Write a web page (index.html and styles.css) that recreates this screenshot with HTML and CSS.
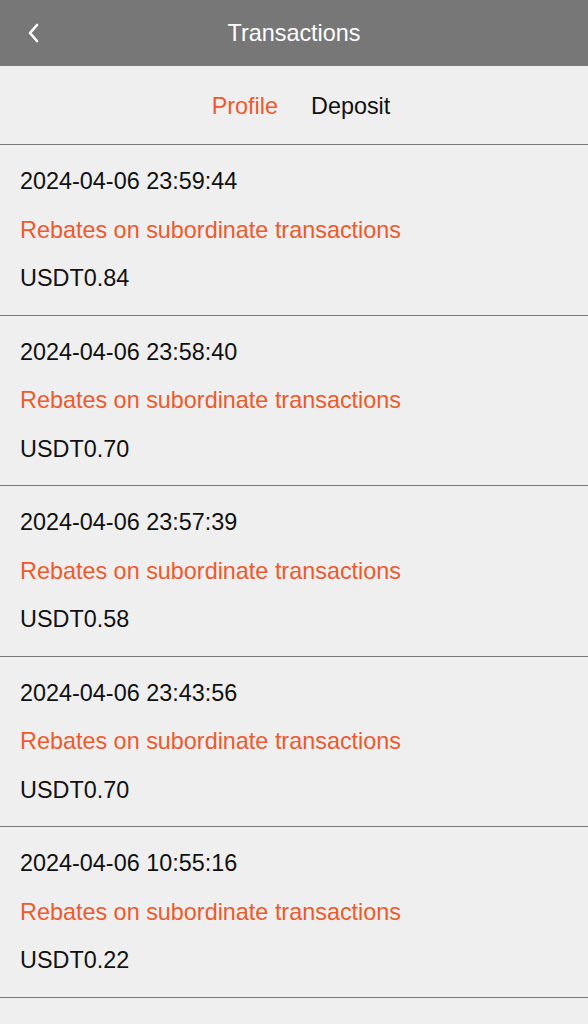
FILE: index.html
```html
<!DOCTYPE html>
<html>
<head>
<meta charset="utf-8">
<link rel="stylesheet" href="styles.css">
</head>
<body>
<header class="topbar">
  <span class="back">
    <svg width="14" height="22" viewBox="0 0 14 22"><path d="M11 3 L4 11 L11 19" fill="none" stroke="#fff" stroke-width="2.6" stroke-linecap="round" stroke-linejoin="round"/></svg>
  </span>
  <h1 class="title">Transactions</h1>
</header>
<nav class="tabs">
  <span class="tab active">Profile</span>
  <span class="tab">Deposit</span>
</nav>
<ul class="list">
  <li class="item"><div class="date">2024-04-06 23:59:44</div><div class="desc">Rebates on subordinate transactions</div><div class="amt">USDT0.84</div></li>
  <li class="item"><div class="date">2024-04-06 23:58:40</div><div class="desc">Rebates on subordinate transactions</div><div class="amt">USDT0.70</div></li>
  <li class="item"><div class="date">2024-04-06 23:57:39</div><div class="desc">Rebates on subordinate transactions</div><div class="amt">USDT0.58</div></li>
  <li class="item"><div class="date">2024-04-06 23:43:56</div><div class="desc">Rebates on subordinate transactions</div><div class="amt">USDT0.70</div></li>
  <li class="item"><div class="date">2024-04-06 10:55:16</div><div class="desc">Rebates on subordinate transactions</div><div class="amt">USDT0.22</div></li>
</ul>
</body>
</html>
```
FILE: styles.css
```css
html, body {
  margin: 0;
  padding: 0;
  background: #efefef;
  font-family: "Liberation Sans", Arial, sans-serif;
  color: #111;
}
.topbar {
  height: 66px;
  background: #777777;
  display: flex;
  align-items: center;
  justify-content: center;
  position: relative;
}
.back {
  position: absolute;
  left: 26px;
  top: 22px;
  display: flex;
}
.title {
  margin: 0;
  font-size: 23.4px;
  font-weight: normal;
  color: #fff;
}
.tabs {
  height: 79px;
  box-sizing: border-box;
  padding: 2px 0 0 14px;
  display: flex;
  justify-content: center;
  align-items: center;
  gap: 33px;
  border-bottom: 1px solid #777;
  font-size: 23.4px;
}
.tab { color: #111; }
.tab.active { color: #ee5a2c; }
.list {
  list-style: none;
  margin: 0;
  padding: 0;
}
.item {
  border-bottom: 1px solid #777;
  padding: 23px 20px 0;
  box-sizing: border-box;
  height: 170.6px;
  font-size: 23.4px;
  display: flex;
  flex-direction: column;
  gap: 22.5px;
}
.item div { line-height: 26px; }
.desc { color: #ee5a2c; }
```
